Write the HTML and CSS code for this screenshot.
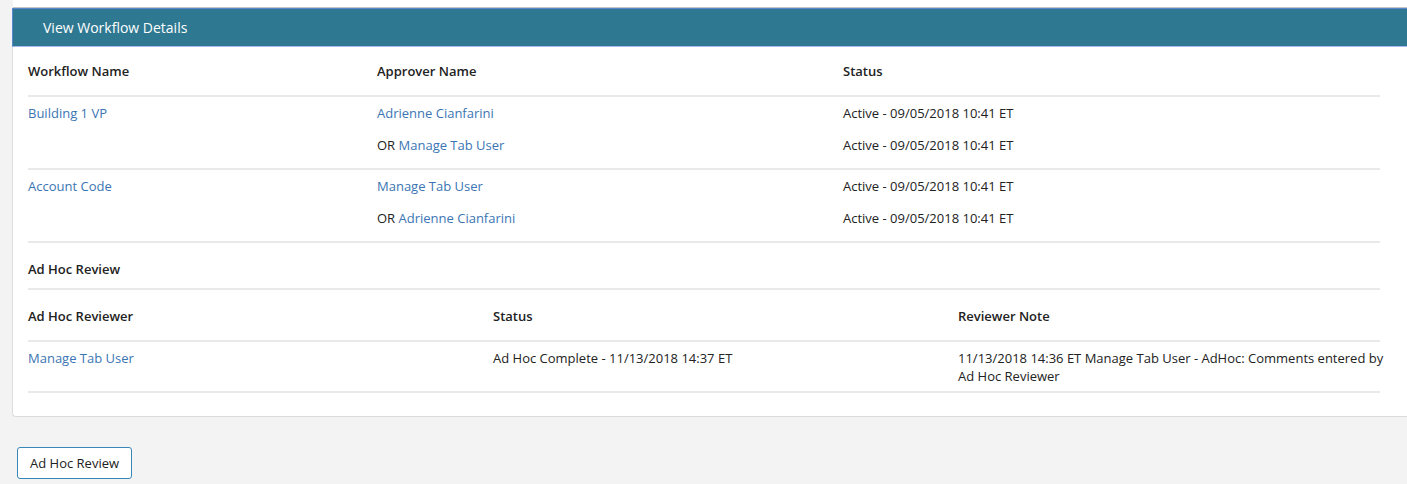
FILE: index.html
```
<!DOCTYPE html>
<html>
<head>
    <title>View Workflow Details</title>
    <link rel="stylesheet" href="styles.css">
</head>
<body>
    <div class="top-strip"></div>
    <div class="panel">
        <div class="panel-heading">View Workflow Details</div>
        <div class="panel-body">
            <table class="wf-table">
                <colgroup>
                    <col style="width: 349px">
                    <col style="width: 466px">
                    <col>
                </colgroup>
                <thead>
                    <tr>
                        <th>Workflow Name</th>
                        <th>Approver Name</th>
                        <th>Status</th>
                    </tr>
                </thead>
                <tbody>
                    <tr>
                        <td><div class="line"><a href="#">Building 1 VP</a></div></td>
                        <td>
                            <div class="line"><a href="#">Adrienne Cianfarini</a></div>
                            <div class="line">OR <a href="#">Manage Tab User</a></div>
                        </td>
                        <td>
                            <div class="line">Active - 09/05/2018 10:41 ET</div>
                            <div class="line">Active - 09/05/2018 10:41 ET</div>
                        </td>
                    </tr>
                    <tr>
                        <td><div class="line"><a href="#">Account Code</a></div></td>
                        <td>
                            <div class="line"><a href="#">Manage Tab User</a></div>
                            <div class="line">OR <a href="#">Adrienne Cianfarini</a></div>
                        </td>
                        <td>
                            <div class="line">Active - 09/05/2018 10:41 ET</div>
                            <div class="line">Active - 09/05/2018 10:41 ET</div>
                        </td>
                    </tr>
                    <tr class="section-row">
                        <td colspan="3">Ad Hoc Review</td>
                    </tr>
                </tbody>
            </table>

            <table class="wf-table adhoc-table">
                <colgroup>
                    <col style="width: 465px">
                    <col style="width: 465px">
                    <col>
                </colgroup>
                <thead>
                    <tr>
                        <th>Ad Hoc Reviewer</th>
                        <th>Status</th>
                        <th>Reviewer Note</th>
                    </tr>
                </thead>
                <tbody>
                    <tr>
                        <td><a href="#">Manage Tab User</a></td>
                        <td>Ad Hoc Complete - 11/13/2018 14:37 ET</td>
                        <td><div class="note">11/13/2018 14:36 ET Manage Tab User - AdHoc: Comments entered by Ad Hoc Reviewer</div></td>
                    </tr>
                </tbody>
            </table>
        </div>
    </div>
    <button type="button" class="btn">Ad Hoc Review</button>
</body>
</html>
```
FILE: styles.css
```
body {
    margin: 0;
    font-family: "Open Sans", "Noto Sans", sans-serif;
    font-size: 13px;
    color: #222;
    background-color: #f3f3f3;
    overflow: hidden;
}

a {
    color: #3b75b4;
    text-decoration: none;
}

.top-strip {
    height: 7px;
    margin-left: 13px;
    background-color: #fff;
    border-bottom: 1px solid #c4c4c4;
}

.panel {
    margin-left: 12px;
    background-color: #fff;
    border: 1px solid #dcdcdc;
    border-top: none;
    border-right: none;
    border-radius: 0 0 0 4px;
}

.panel-heading {
    margin: 0 0 0 -1px;
    height: 37px;
    line-height: 37px;
    padding-left: 30px;
    background-color: #2e7891;
    border: 1px solid #5a86cf;
    border-bottom-color: #a9b8ef;
    border-right: none;
    color: #fff;
    font-size: 14px;
}

.panel-body {
    padding: 0 27px 23px 15px;
}

.wf-table {
    width: 100%;
    border-collapse: collapse;
    table-layout: fixed;
}

.wf-table th {
    text-align: left;
    font-weight: 600;
    padding: 14px 0;
    line-height: 20px;
    border-bottom: 2px solid #e9e9e9;
}

.wf-table td {
    vertical-align: top;
    padding: 6px 0 1px;
    border-bottom: 2px solid #e9e9e9;
}

.line {
    line-height: 20px;
    margin-bottom: 12px;
}

.section-row td {
    font-weight: 600;
    padding: 16px 0 9px;
    line-height: 20px;
}

.adhoc-table th {
    padding: 16px 0 14px;
}

.adhoc-table td {
    padding: 7px 0 6px;
    line-height: 18px;
}

.note {
    width: 435px;
}

.btn {
    margin: 30px 0 0 17px;
    height: 32px;
    padding: 0 12px;
    font-family: inherit;
    font-size: 13px;
    color: #222;
    background-color: #fff;
    border: 1px solid #3787b8;
    border-radius: 3px;
}
```
